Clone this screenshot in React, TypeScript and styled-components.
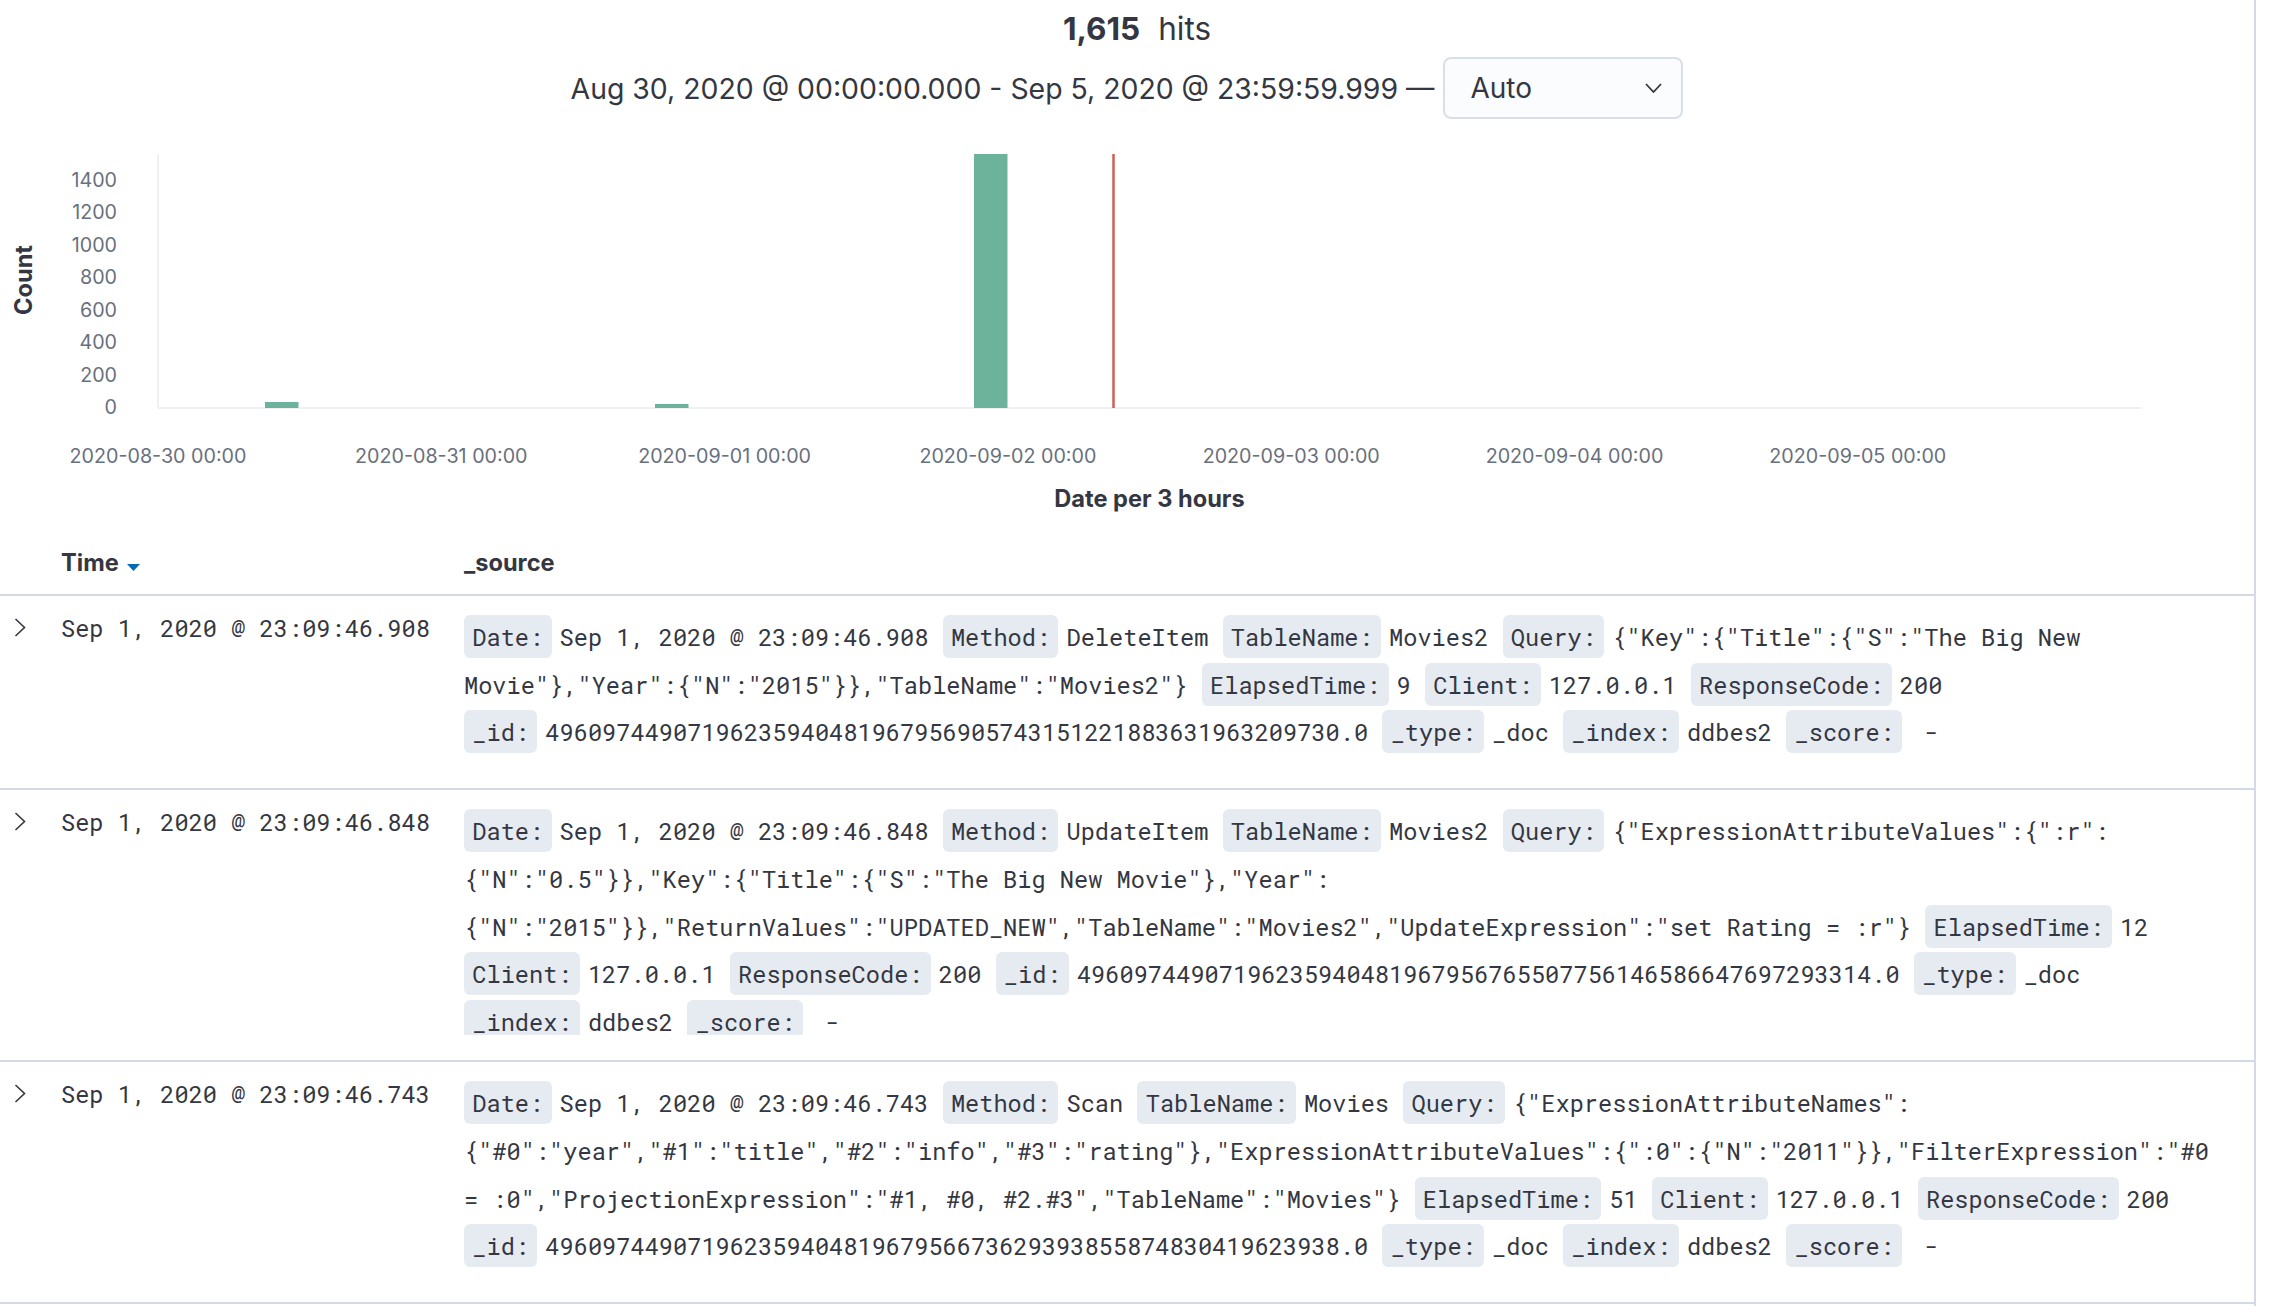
import React from 'react';
import styled, { createGlobalStyle } from 'styled-components';

const SANS = `Inter, "Noto Sans", "Liberation Sans", sans-serif`;
const MONO = `"Roboto Mono", "DejaVu Sans Mono", "Liberation Mono", monospace`;

const GlobalStyle = createGlobalStyle`
  html, body { margin: 0; padding: 0; background: #ffffff; }
  body {
    overflow: hidden;
    font-family: ${SANS};
    color: #343741;
    -webkit-font-smoothing: antialiased;
  }
`;

const Page = styled.div`
  box-sizing: border-box;
  width: 2256px;
  height: 1306px;
  border-right: 2px solid #d3dae6;
  overflow: hidden;
  background: #ffffff;
`;

const Summary = styled.section`
  display: flex;
  flex-direction: column;
  align-items: center;
`;

const HitsLine = styled.div`
  height: 57px;
  display: flex;
  align-items: center;
  gap: 18px;
  padding-left: 20px;
  font-size: 31.5px;
`;

const HitCount = styled.strong`
  font-weight: 700;
  color: #343741;
`;

const HitLabel = styled.span`
  font-weight: 400;
`;

const IntervalRow = styled.div`
  height: 62px;
  display: flex;
  align-items: center;
  gap: 9px;
`;

const RangeText = styled.span`
  font-size: 28.4px;
  padding-top: 1px;
`;

const IntervalSelect = styled.div`
  box-sizing: border-box;
  width: 240px;
  height: 62px;
  display: flex;
  align-items: center;
  justify-content: space-between;
  padding: 0 19px 0 25px;
  border: 2px solid #d9dfe9;
  border-radius: 8px;
  background: #fbfcfd;
  font-size: 28px;
`;

const ChartWrap = styled.div`
  height: 411px;
`;

const ChartSvg = styled.svg`
  display: block;
  font-family: ${SANS};
`;

const COLS = '45px 403px 1fr';

const HeadRow = styled.div`
  display: grid;
  grid-template-columns: ${COLS};
  height: 64px;
  align-items: center;
  border-bottom: 2px solid #d3dae6;
`;

const HeadCell = styled.div<{ $col: number }>`
  grid-column: ${(p) => p.$col};
  display: flex;
  align-items: center;
  gap: 8px;
  padding-left: 16px;
  font-size: 23.6px;
  font-weight: 700;
  color: #343741;
`;

const SortIcon = styled.svg`
  margin-top: 10px;
`;

const DocRow = styled.div`
  display: grid;
  grid-template-columns: ${COLS};
  align-items: start;
  border-bottom: 2px solid #d3dae6;
`;

const ExpandCell = styled.div`
  padding: 22px 0 0 14px;
`;

const TimeCell = styled.div`
  padding: 17px 16px 0 16px;
  font-family: ${MONO};
  font-size: 23.65px;
  line-height: 30px;
  white-space: nowrap;
  color: #343741;
`;

const SourceCell = styled.div<{ $clipped: boolean }>`
  padding: 17px 26px ${(p) => (p.$clipped ? 25 : 32)}px 16px;
  min-width: 0;
`;

const SourceList = styled.div`
  font-family: ${MONO};
  font-size: 23.65px;
  line-height: 47.7px;
  color: #343741;
  max-height: 228px;
  overflow: hidden;
`;

const FieldLabel = styled.span`
  padding: 6px 8.3px;
  margin-right: 8px;
  border-radius: 6px;
  background: #e6ebf2;
`;

const FieldValue = styled.span``;

type Field = [string, string];
type Row = { time: string; clipped: boolean; fields: Field[] };

const rows: Row[] = [
  {
    time: 'Sep 1, 2020 @ 23:09:46.908',
    clipped: false,
    fields: [
      ['Date:', 'Sep 1, 2020 @ 23:09:46.908'],
      ['Method:', 'DeleteItem'],
      ['TableName:', 'Movies2'],
      ['Query:', '{"Key":{"Title":{"S":"The Big New Movie"},"Year":{"N":"2015"}},"TableName":"Movies2"}'],
      ['ElapsedTime:', '9'],
      ['Client:', '127.0.0.1'],
      ['ResponseCode:', '200'],
      ['_id:', '49609744907196235940481967956905743151221883631963209730.0'],
      ['_type:', '_doc'],
      ['_index:', 'ddbes2'],
      ['_score:', '\u00a0-'],
    ],
  },
  {
    time: 'Sep 1, 2020 @ 23:09:46.848',
    clipped: true,
    fields: [
      ['Date:', 'Sep 1, 2020 @ 23:09:46.848'],
      ['Method:', 'UpdateItem'],
      ['TableName:', 'Movies2'],
      [
        'Query:',
        '{"ExpressionAttributeValues":{":r":{"N":"0.5"}},"Key":{"Title":{"S":"The Big New Movie"},"Year":{"N":"2015"}},"ReturnValues":"UPDATED_NEW","TableName":"Movies2","UpdateExpression":"set Rating = :r"}',
      ],
      ['ElapsedTime:', '12'],
      ['Client:', '127.0.0.1'],
      ['ResponseCode:', '200'],
      ['_id:', '49609744907196235940481967956765507756146586647697293314.0'],
      ['_type:', '_doc'],
      ['_index:', 'ddbes2'],
      ['_score:', '\u00a0-'],
    ],
  },
  {
    time: 'Sep 1, 2020 @ 23:09:46.743',
    clipped: false,
    fields: [
      ['Date:', 'Sep 1, 2020 @ 23:09:46.743'],
      ['Method:', 'Scan'],
      ['TableName:', 'Movies'],
      [
        'Query:',
        '{"ExpressionAttributeNames":{"#0":"year","#1":"title","#2":"info","#3":"rating"},"ExpressionAttributeValues":{":0":{"N":"2011"}},"FilterExpression":"#0 = :0","ProjectionExpression":"#1, #0, #2.#3","TableName":"Movies"}',
      ],
      ['ElapsedTime:', '51'],
      ['Client:', '127.0.0.1'],
      ['ResponseCode:', '200'],
      ['_id:', '49609744907196235940481967956673629393855874830419623938.0'],
      ['_type:', '_doc'],
      ['_index:', 'ddbes2'],
      ['_score:', '\u00a0-'],
    ],
  },
];

const withBreaks = (v: string) =>
  v.split(/(?<=:)(?=\{)/).map((p, i) => (
    <React.Fragment key={i}>
      {i > 0 ? <wbr /> : null}
      {p}
    </React.Fragment>
  ));

/* chart geometry (local to the chart box) */
const AX_X = 158;
const BASE_Y = 289;
const TOP_Y = 35;
const END_X = 2141;
const PX_PER = 0.1625;
const DAY = 283.3;
const yTicks = [0, 200, 400, 600, 800, 1000, 1200, 1400];
const xTicks = [
  '2020-08-30 00:00',
  '2020-08-31 00:00',
  '2020-09-01 00:00',
  '2020-09-02 00:00',
  '2020-09-03 00:00',
  '2020-09-04 00:00',
  '2020-09-05 00:00',
];
const bars = [
  { x: 265, h: 6 },
  { x: 655, h: 4 },
  { x: 974, h: BASE_Y - TOP_Y },
];

function Histogram() {
  return (
    <ChartWrap>
      <ChartSvg width={2254} height={411} viewBox="0 0 2254 411">
        <text
          x={23}
          y={161}
          transform="rotate(-90 23 161)"
          textAnchor="middle"
          dominantBaseline="central"
          fontSize={23.6}
          fontWeight={700}
          fill="#343741"
        >
          Count
        </text>
        {yTicks.map((v) => (
          <text
            key={v}
            x={117}
            y={BASE_Y - v * PX_PER - 1}
            textAnchor="end"
            dominantBaseline="central"
            fontSize={19.7}
            fill="#69707d"
          >
            {v}
          </text>
        ))}
        <line x1={AX_X} y1={TOP_Y} x2={AX_X} y2={BASE_Y} stroke="#eef0f3" strokeWidth={2} />
        <line x1={AX_X} y1={BASE_Y} x2={END_X} y2={BASE_Y} stroke="#eef0f3" strokeWidth={2} />
        {bars.map((b) => (
          <rect key={b.x} x={b.x} y={BASE_Y - b.h} width={33.5} height={b.h} fill="#6db39b" />
        ))}
        <line x1={1113.5} y1={TOP_Y} x2={1113.5} y2={BASE_Y} stroke="#cf5f52" strokeWidth={2.5} />
        {xTicks.map((t, i) => (
          <text
            key={t}
            x={AX_X + i * DAY}
            y={337}
            textAnchor="middle"
            dominantBaseline="central"
            fontSize={19.7}
            fill="#69707d"
          >
            {t}
          </text>
        ))}
        <text
          x={(AX_X + END_X) / 2}
          y={379}
          textAnchor="middle"
          dominantBaseline="central"
          fontSize={23.6}
          fontWeight={700}
          fill="#343741"
        >
          Date per 3 hours
        </text>
      </ChartSvg>
    </ChartWrap>
  );
}

export default function App() {
  return (
    <>
      <GlobalStyle />
      <Page>
        <Summary>
          <HitsLine>
            <HitCount>1,615</HitCount>
            <HitLabel>hits</HitLabel>
          </HitsLine>
          <IntervalRow>
            <RangeText>Aug 30, 2020 @ 00:00:00.000 - Sep 5, 2020 @ 23:59:59.999 —</RangeText>
            <IntervalSelect>
              <span>Auto</span>
              <svg width="17" height="10" viewBox="0 0 17 10">
                <polyline points="1,1 8.5,9 16,1" fill="none" stroke="#343741" strokeWidth="1.8" />
              </svg>
            </IntervalSelect>
          </IntervalRow>
        </Summary>

        <Histogram />

        <HeadRow>
          <HeadCell $col={2}>
            Time
            <SortIcon width="13" height="7" viewBox="0 0 13 7">
              <polygon points="0,0 13,0 6.5,7" fill="#006bb4" />
            </SortIcon>
          </HeadCell>
          <HeadCell $col={3}>_source</HeadCell>
        </HeadRow>

        {rows.map((r) => (
          <DocRow key={r.time}>
            <ExpandCell>
              <svg width="12" height="19" viewBox="0 0 12 19">
                <polyline points="1.5,1 10.5,9.5 1.5,18" fill="none" stroke="#343741" strokeWidth="1.6" />
              </svg>
            </ExpandCell>
            <TimeCell>{r.time}</TimeCell>
            <SourceCell $clipped={r.clipped}>
              <SourceList>
                {r.fields.map(([k, v], j) => (
                  <React.Fragment key={k}>
                    {j > 0 ? ' ' : null}
                    <FieldLabel>{k}</FieldLabel>
                    <FieldValue>
                      {'\u2060'}
                      {withBreaks(v)}
                    </FieldValue>
                  </React.Fragment>
                ))}
              </SourceList>
            </SourceCell>
          </DocRow>
        ))}
      </Page>
    </>
  );
}
